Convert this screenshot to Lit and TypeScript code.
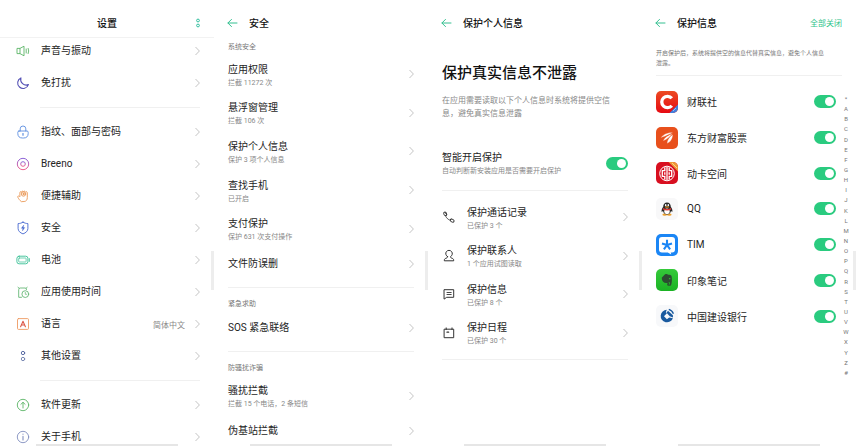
import { LitElement, html, css, svg, nothing, TemplateResult } from "lit";
import { customElement } from "lit/decorators.js";

const shared = css`
  * { box-sizing: border-box; }
  button, a, input { font: inherit; color: inherit; }
  button { border: 0; margin: 0; padding: 0; background: none; text-align: left; cursor: pointer; }
  svg { display: block; flex: none; }
  h1, h2, p, ul { margin: 0; padding: 0; font-weight: 400; list-style: none; }
`;

type Icon = TemplateResult;

const line = (color: string, body: unknown): Icon => html`
  <svg width="14" height="14" viewBox="0 0 14 14" fill="none" stroke=${color}
    stroke-width="0.9" stroke-linecap="round" stroke-linejoin="round" aria-hidden="true">${body}</svg>`;

const chevron = html`
  <svg class="chevron" width="5" height="10" viewBox="0 0 5 10" fill="none" stroke="#c4c4c4" aria-hidden="true">
    <path d="M.5 1 4.4 5 .5 9" />
  </svg>`;

const icons: Record<string, Icon> = {
  sound: line("#5cb568", svg`<path d="M1.400 4.400H4v5.200H1.400zM4 4.400l4-2.200v9.600L4 9.600M10.200 5v4M12.200 4.400q1.100 2.600 0 5.200" />`),
  moon: line("#5350b5", svg`<path d="M4.900 1.900a5.500 5.500 0 1 0 7.500 6.700A5.600 5.600 0 0 1 4.900 1.900z" stroke-width="1.100" />`),
  lock: line("#5b8de0", svg`<path d="M4.200 6V3.800a2.800 2.800 0 0 1 5.600 0V6" /><path d="M3 6h8q1.200 0 1.200 1.400v1.200A4.600 4.600 0 0 1 7.600 13H6.400a4.600 4.600 0 0 1-4.600-4.400V7.400Q1.800 6 3 6z" /><path d="M7 8.600v1.600" stroke-width="1.200" />`),
  breeno: html`
    <svg width="14" height="14" viewBox="0 0 14 14" fill="none" stroke="url(#breeno)" aria-hidden="true">
      <defs><linearGradient id="breeno" x1="0" y1="0" x2="0" y2="1">
        <stop offset="0" stop-color="#8a62d8" /><stop offset="1" stop-color="#f0608e" />
      </linearGradient></defs>
      <circle cx="7" cy="7" r="5.700" /><circle cx="7" cy="7" r="2.300" />
    </svg>`,
  hand: line("#ea9858", svg`<path d="M5 12.400C3.600 11.200 2.500 9.600 1.800 8.200c-.4-1 .8-1.700 1.600-.9l.5.500V3.600c0-1.200 1.300-1.200 1.500-.2.100-1.500 1.800-1.700 2-.3.300-1.400 1.900-1.200 2 .2.500-1 1.900-.7 1.900.5v4.800c0 2.200-1 3.800-2.800 3.900z" /><circle cx="7.500" cy="5" r="2.200" /><circle cx="7.500" cy="5" r=".7" fill="#ea9858" />`),
  shield: line("#4668cf", svg`<path d="M7 1.200c1.500.9 3.100 1.300 4.900 1.400v4.900c0 2.500-2 4.300-4.900 5.400-2.900-1.100-4.900-2.900-4.900-5.400V2.600C3.900 2.500 5.500 2.100 7 1.200z" /><path d="M7.600 4.300 5.400 7.300h1.500L6.500 9.800l2.200-3.200H7.200z" fill="#4668cf" stroke-width=".4" />`),
  battery: line("#35bf94", svg`<rect x=".9" y="3.200" width="11" height="7.600" rx="2.200" /><rect x="2.700" y="5" width="7.400" height="4" rx=".6" stroke-width=".7" /><path d="M13.300 5.600v2.800" />`),
  usage: line("#66b877", svg`<path d="M5.500 12.300H2.700V4.700Q2.700 3 4.200 3h4.900q1.500 0 1.500 1.500M2 2.300l1.200 1M11.200 2.300l-1.200 1" /><circle cx="9.300" cy="9.100" r="3.400" /><path d="M9.300 7.400v1.900h1.300" stroke-width=".7" />`),
  language: line("#ee9a62", svg`<rect x="1.500" y="1.600" width="11" height="10.800" rx="1" /><path d="M4.600 9.800 7 4.200l2.400 5.600M5.500 8h3" stroke="#dc5a4a" stroke-width="1.100" />`),
  other: line("#6c7dab", svg`<circle cx="7" cy="4" r="1.700" stroke="#4c5f9c" /><circle cx="7" cy="10" r="1.700" />`),
  update: line("#5cb568", svg`<circle cx="7" cy="7" r="5.700" /><path d="M7 10V4.400M4.900 6.300 7 4.300l2.100 2" />`),
  about: line("#8290c0", svg`<circle cx="7" cy="7" r="5.700" /><path d="M7 6.400v3.500M7 4v.3" stroke-width="1.100" />`),
  phone: line("#333", svg`<path d="M3 2.500 4.700 4.600 3.700 6.200C4.500 8 6.100 9.500 7.800 10.100l1.300-1" /><ellipse cx="3.200" cy="3.800" rx="1.400" ry="1.900" transform="rotate(-25 3.200 3.800)" /><ellipse cx="10.200" cy="10.600" rx="2" ry="1.400" transform="rotate(25 10.200 10.600)" />`),
  contact: line("#333", svg`<path d="M5.500 7.600A3.300 3.300 0 1 1 8.500 7.600c0 1.300.7 1.400 1.900 1.800 1 .4 1.300 1 1.300 2.400H2.300c0-1.400.3-2 1.300-2.400 1.200-.4 1.900-.5 1.900-1.800z" stroke-width="1" />`),
  message: line("#333", svg`<path d="M2.400 2.700h9.300v7.600H4.700l-2.300 1.600z" stroke-width="1" /><path d="M5 5.500h4.200M5 7.500h4.200" />`),
  calendar: line("#333", svg`<path d="M2.500 3.200h9.200v8.500H2.500zM4.200 1.900v1.600M10 1.900v1.600" stroke-width="1" /><path d="M5 6.200h1.600" stroke-width="1.300" />`),
};

const appIcon = (body: unknown): Icon =>
  html`<svg width="22" height="22" viewBox="0 0 22 22" aria-hidden="true">${body}</svg>`;

const appIcons: Record<string, Icon> = {
  cls: appIcon(svg`<defs><linearGradient id="cls" x1="0" y1="0" x2="0" y2="1"><stop offset="0" stop-color="#ec4a22"/><stop offset="1" stop-color="#e60a12"/></linearGradient>
    <clipPath id="clsc"><rect width="22" height="22" rx="5"/></clipPath></defs>
    <g clip-path="url(#clsc)"><rect width="22" height="22" fill="url(#cls)"/>
    <path d="M22 13.500V22h-8.500z" fill="#4180dd"/><path d="m17 20 3-3" stroke="#9cc3f5"/></g>
    <path d="M15.800 7.300A5.700 5.700 0 1 0 15.800 14.700" fill="none" stroke="#fff" stroke-width="3.300"/>`),
  east: appIcon(svg`<rect width="22" height="22" rx="5" fill="#e8501c"/>
    <path d="M4.800 10.900C7.500 7.200 11 5.600 16.900 5.500 13.300 7.500 10.500 8.700 4.800 10.900zM6.900 13.900C8.500 10.300 12.200 8.100 16.600 6.400 13.600 9.900 11.200 12.400 6.900 13.900zM11.200 16.500C10.900 13.300 13.400 10 16.800 7.500 16.900 11.300 14.900 14.900 11.200 16.500z" fill="#fff" stroke="#e8501c" stroke-width=".3"/>`),
  citic: appIcon(svg`<defs><clipPath id="citic"><rect width="22" height="22" rx="5"/></clipPath></defs>
    <g clip-path="url(#citic)"><rect width="22" height="22" fill="#d80f20"/><path d="M12.500 0H22v9.500z" fill="#ee9b37"/><path d="m16 1 5 5" stroke="#ffe0a0" stroke-width=".8"/></g>
    <circle cx="11" cy="11.500" r="7.300" fill="#d80f20" stroke="#fff"/>
    <path d="M11 4.800v13.400M8.800 5.300v3.400H6.300v5.600h2.500v3.400M13.200 5.300v3.400h2.500v5.600h-2.500v3.400M8.800 10.200v2.600M13.200 10.200v2.600" fill="none" stroke="#fff" stroke-width="1.300"/>`),
  qq: appIcon(svg`<rect width="22" height="22" rx="5" fill="#f8f8f9"/>
    <ellipse cx="8.700" cy="16.700" rx="2.300" ry="1.100" fill="#eda02d"/><ellipse cx="13.300" cy="16.700" rx="2.300" ry="1.100" fill="#eda02d"/>
    <path d="M11 4.500c-2.400 0-3.800 1.700-3.800 4.200C6 10.200 5.300 12 5.700 14l1.300-.9c.5 2.300 2 3.500 4 3.500s3.500-1.200 4-3.500l1.300.9c.4-2-.3-3.800-1.500-5.300 0-2.500-1.400-4.200-3.800-4.200z" fill="#292929"/>
    <ellipse cx="11" cy="13.300" rx="2.700" ry="2.800" fill="#fff"/><ellipse cx="9.700" cy="7.200" rx=".8" ry="1.100" fill="#fff"/><ellipse cx="12.300" cy="7.200" rx=".8" ry="1.100" fill="#fff"/>
    <ellipse cx="11" cy="8.900" rx="2.200" ry=".7" fill="#eda02d"/><path d="M7 9.900q4 2 8 0l.2 1.600q-4.200 1.800-8.400 0z" fill="#de3a35"/>`),
  tim: appIcon(svg`<rect width="22" height="22" rx="5" fill="#1b86f5"/>
    <path d="M6 3h10q3 0 3 3v9.500q0 3-3 3h-1.300l.5 1.900-3.400-1.900H6q-3 0-3-3V6q0-3 3-3z" fill="#fff"/>
    <path d="M11 11V5.700M11 11l5-1.600M11 11l3.100 4.300M11 11l-3.100 4.300M11 11 6 9.400" stroke="#1b86f5" stroke-width="2.100"/>`),
  evernote: appIcon(svg`<defs><linearGradient id="ever" x1="0" y1="0" x2="0" y2="1"><stop offset="0" stop-color="#35ca3a"/><stop offset="1" stop-color="#1bb224"/></linearGradient></defs>
    <rect width="22" height="22" rx="5" fill="url(#ever)"/>
    <path d="M5.700 8.700 8.800 5.500c1.300-.8 2.700-.5 3.400.3 1.700 0 3.100.3 3.300 1.300.7 3 .5 6.300-.2 8.300-.4 1.300-1.400 1.500-2.500 1.400-1.400-.1-1.800-.9-1.600-1.900.2-1 1-1.300 2-1.200v1c-.7 0-.8.8-.1.900.7.100 1-.5.800-2.200-.5-.5-1.500-.3-2.100.5-3.400.8-5.800-.8-6.100-5.200z" fill="#2c4c31"/>
    <ellipse cx="13.700" cy="9.700" rx=".8" ry=".6" fill="#2cc233"/>`),
  ccb: appIcon(svg`<rect width="22" height="22" rx="5" fill="#f7f8fa"/>
    <path d="M10.800 4.700A6.300 6.300 0 1 0 16.900 13.200L13.200 12.600 10.900 14.300 8 11.300 10.900 8.300 9.800 7.200z" fill="#1a5a9f"/>
    <path d="M12 5.800 16.900 10.300 17 12.600 13.700 11.200 10.600 7.800z" fill="#1a5a9f"/>
    <path d="M12.800 4.400a7 7 0 0 1 4.600 4.400" fill="none" stroke="#1a5a9f" stroke-width="1.300"/>`),
};

interface Item { title: string; sub?: string; icon?: string; value?: string; }

@customElement("settings-row")
class SettingsRow extends LitElement {
  static properties = { item: { attribute: false } };
  declare item: Item;
  static styles = [shared, css`
    :host { display: flex; min-width: 0; }
    .row { flex: 1; display: flex; align-items: center; min-width: 0; min-height: 32px; }
    .icon { margin-right: 11px; }
    .text { flex: 1; min-width: 0; white-space: nowrap; }
    .title, .sub { display: block; }
    .title { line-height: 14px; }
    .sub { font-size: 7px; line-height: 12px; color: #888; }
    .double { padding-top: 3px; }
    .value { font-size: 8px; color: #888; margin-right: 10px; }
  `];
  render() {
    const { title, sub, icon, value } = this.item;
    return html`<button class="row">
      ${icon ? html`<span class="icon">${icons[icon]}</span>` : nothing}
      <span class="text ${sub ? "double" : ""}"><span class="title">${title}</span>${sub ? html`<span class="sub">${sub}</span>` : nothing}</span>
      ${value ? html`<span class="value">${value}</span>` : nothing}
      ${chevron}
    </button>`;
  }
}

@customElement("app-root")
class AppRoot extends LitElement {
  static styles = [shared, css`
    :host {
      display: grid; grid-template-columns: repeat(4, minmax(0, 1fr)); height: 100vh; overflow: hidden;
      background: #fff; color: #242424;
      font-family: Roboto, "Noto Sans CJK SC", sans-serif; font-size: 10px;
    }
    .screen { position: relative; min-width: 0; overflow: hidden; }
    .edge { position: absolute; right: 0; top: 251px; width: 3px; height: 39px; background: #ededed; }
    .home { position: absolute; left: 17%; right: 17%; bottom: 0; height: 2px; background: #e6e6e6; }
    .bar { display: flex; align-items: center; height: 38px; padding: 7px 14px 0 13px; }
    .bar h1 { flex: 1; font-size: 10px; font-weight: 500; color: #111; }
    .back { width: 22px; }
    .root-bar { border-bottom: 1px solid #f2f2f2; padding: 8px 13px 0; }
    .root-bar h1 { text-align: center; padding-left: 6px; }
    .more { width: 6px; }
    .action { font-size: 8px; color: #30c48a; }
    .body { padding: 0 14px; }
    .scrolled { margin-top: -3px; padding-left: 16px; }
    .rule { height: 1px; border: 0; margin: 7px 0; background: #f0f0f0; }
    .inset { margin: 8px 0 8px 24px; }
    .label { font-size: 7px; line-height: 15px; padding-top: 2px; color: #777; }
    .five, .four, .apps { display: grid; grid-auto-rows: 1fr; }
    .five { min-height: 193px; }
    .four { min-height: 154px; }
    .tall { display: flex; min-height: 39px; }
    .tall settings-row { flex: 1; }
    .hero { font-size: 15px; line-height: 20px; font-weight: 500; color: #111; margin-top: 25px; white-space: nowrap; }
    .lead { font-size: 8px; line-height: 13px; color: #888; margin: 11px 0 24px; }
    .switch-row { display: flex; align-items: center; min-height: 39px; }
    .switch-text { flex: 1; }
    .switch-title, .switch-sub { display: block; white-space: nowrap; }
    .switch-title { line-height: 14px; }
    .switch-sub { font-size: 7px; line-height: 12px; color: #888; }
    .switch {
      appearance: none; flex: none; display: flex; justify-content: flex-start; align-items: center;
      width: 22px; height: 13px; margin: 0; padding: 2px; border-radius: 7px; background: #ccc;
    }
    .switch::before { content: ""; width: 9px; height: 9px; border-radius: 50%; background: #fff; }
    .switch:checked { background: #2acb7f; justify-content: flex-end; }
    .note { font-size: 6px; line-height: 10px; color: #777; margin-top: 10px; }
    .apps { flex: 1; min-height: 250px; }
    .app { display: flex; align-items: center; gap: 9px; }
    .app-name { flex: 1; }
    .split { display: flex; align-items: flex-start; padding: 1px 5px 0 14px; }
    .index { display: flex; flex-direction: column; width: 10px; min-height: 284px; margin: 10px 0 0 5px; }
    .letter { flex: 1; text-align: center; font-size: 6px; line-height: 10px; color: #777; text-decoration: none; }
  `];

  private rows(items: Item[]) {
    return items.map((item) => html`<settings-row .item=${item}></settings-row>`);
  }

  private bar(title: string, action?: string) {
    return html`<header class="bar">
      <button class="back" aria-label="返回">
        <svg width="11" height="10" viewBox="0 0 11 10" fill="none" stroke="#35c091" stroke-linecap="round" stroke-linejoin="round">
          <path d="M10 5H1M4.500 1.400.900 5l3.600 3.600" />
        </svg>
      </button>
      <h1>${title}</h1>
      ${action ? html`<button class="action">${action}</button>` : nothing}
    </header>`;
  }

  private edges = html`<span class="edge"></span><span class="home"></span>`;

  render() {
    return html`
      <section class="screen">
        <header class="bar root-bar">
          <h1>设置</h1>
          <button class="more" aria-label="更多">
            <svg width="6" height="10" viewBox="0 0 6 10" fill="none" stroke="#35c0a0"><circle cx="3" cy="2.500" r="1.400" /><circle cx="3" cy="7.500" r="1.400" /></svg>
          </button>
        </header>
        <div class="body scrolled">
          ${this.rows([{ icon: "sound", title: "声音与振动" }, { icon: "moon", title: "免打扰" }])}
          <hr class="rule inset" />
          ${this.rows([
            { icon: "lock", title: "指纹、面部与密码" }, { icon: "breeno", title: "Breeno" },
            { icon: "hand", title: "便捷辅助" }, { icon: "shield", title: "安全" },
            { icon: "battery", title: "电池" }, { icon: "usage", title: "应用使用时间" },
            { icon: "language", title: "语言", value: "简体中文" }, { icon: "other", title: "其他设置" },
          ])}
          <hr class="rule inset" />
          ${this.rows([{ icon: "update", title: "软件更新" }, { icon: "about", title: "关于手机" }])}
        </div>
        ${this.edges}
      </section>

      <section class="screen">
        ${this.bar("安全")}
        <div class="body">
          <h2 class="label">系统安全</h2>
          <div class="five">${this.rows([
            { title: "应用权限", sub: "拦截 11272 次" }, { title: "悬浮窗管理", sub: "拦截 106 次" },
            { title: "保护个人信息", sub: "保护 3 项个人信息" }, { title: "查找手机", sub: "已开启" },
            { title: "支付保护", sub: "保护 631 次支付操作" },
          ])}</div>
          ${this.rows([{ title: "文件防误删" }])}
          <hr class="rule" />
          <h2 class="label">紧急求助</h2>
          ${this.rows([{ title: "SOS 紧急联络" }])}
          <hr class="rule" />
          <h2 class="label">防骚扰诈骗</h2>
          <div class="tall">${this.rows([{ title: "骚扰拦截", sub: "拦截 15 个电话，2 条短信" }])}</div>
          ${this.rows([{ title: "伪基站拦截" }])}
        </div>
        ${this.edges}
      </section>

      <section class="screen">
        ${this.bar("保护个人信息")}
        <div class="body">
          <h2 class="hero">保护真实信息不泄露</h2>
          <p class="lead">在应用需要读取以下个人信息时系统将提供空信<br />息，避免真实信息泄露</p>
          <label class="switch-row">
            <span class="switch-text">
              <span class="switch-title">智能开启保护</span>
              <span class="switch-sub">自动判断新安装应用是否需要开启保护</span>
            </span>
            <input class="switch" type="checkbox" checked />
          </label>
          <hr class="rule" />
          <div class="four">${this.rows([
            { icon: "phone", title: "保护通话记录", sub: "已保护 3 个" },
            { icon: "contact", title: "保护联系人", sub: "1 个应用试图读取" },
            { icon: "message", title: "保护信息", sub: "已保护 8 个" },
            { icon: "calendar", title: "保护日程", sub: "已保护 30 个" },
          ])}</div>
          <hr class="rule" />
        </div>
        ${this.edges}
      </section>

      <section class="screen">
        ${this.bar("保护信息", "全部关闭")}
        <div class="body">
          <p class="note">开启保护后，系统将提供空的信息代替真实信息，避免个人信息<br />泄露。</p>
          <hr class="rule" />
        </div>
        <div class="split">
          <div class="apps">
            ${[["cls", "财联社"], ["east", "东方财富股票"], ["citic", "动卡空间"], ["qq", "QQ"],
               ["tim", "TIM"], ["evernote", "印象笔记"], ["ccb", "中国建设银行"]].map(([icon, name]) => html`
              <label class="app">${appIcons[icon]}<span class="app-name">${name}</span>
                <input class="switch" type="checkbox" checked /></label>`)}
          </div>
          <nav class="index" aria-label="索引">
            ${[..."*ABCDEFGHIJKLMNOPQRSTUVWXYZ#"].map((c) => html`<a class="letter" href="#">${c}</a>`)}
          </nav>
        </div>
        ${this.edges}
      </section>`;
  }
}
